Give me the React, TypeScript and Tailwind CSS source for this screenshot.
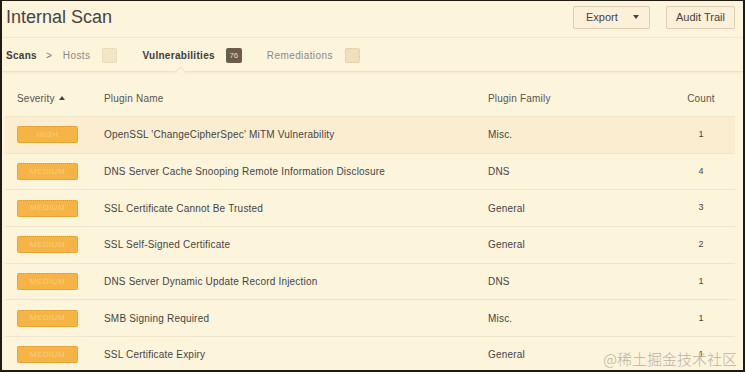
import React from 'react';

const ROWS = [
  { name: "OpenSSL 'ChangeCipherSpec' MiTM Vulnerability", family: 'Misc.', count: 1 },
  { name: 'DNS Server Cache Snooping Remote Information Disclosure', family: 'DNS', count: 4 },
  { name: 'SSL Certificate Cannot Be Trusted', family: 'General', count: 3 },
  { name: 'SSL Self-Signed Certificate', family: 'General', count: 2 },
  { name: 'DNS Server Dynamic Update Record Injection', family: 'DNS', count: 1 },
  { name: 'SMB Signing Required', family: 'Misc.', count: 1 },
  { name: 'SSL Certificate Expiry', family: 'General', count: 1 },
];

const App: React.FC = () => {
  return (
    <div className="relative w-[745px] h-[372px] overflow-hidden bg-[#fdf4dc] border-x-2 border-b-2 border-t border-[#1e1a14] font-['Liberation_Sans',Arial,sans-serif] text-[#4a4a4a]">
      {/* Title bar */}
      <div className="flex items-center h-[37px] pl-[4px] pr-[8px] border-b border-[#f3e8cc]">
        <h1 className="text-[18px] leading-none text-[#444] pb-[4px]">Internal Scan</h1>
        <div className="ml-auto flex items-center gap-[16px] pb-[4px]">
          <button className="flex items-center h-[23px] w-[77px] pl-[12px] pr-[10px] border border-[#dccfb1] rounded-[2px] bg-[#fcf1d8] text-[11px] text-[#444]">
            Export
            <span className="ml-auto w-0 h-0 border-x-[3.5px] border-x-transparent border-t-[4px] border-t-[#444]" />
          </button>
          <button className="h-[23px] w-[69px] border border-[#dccfb1] rounded-[2px] bg-[#fcf1d8] text-[11px] text-[#444]">
            Audit Trail
          </button>
        </div>
      </div>

      {/* Tabs */}
      <div className="relative flex items-center h-[34px] pl-[4px] pt-[2px] text-[10px] border-b border-[#efe2c3] shadow-[0_1px_2px_rgba(180,150,90,0.12)]">
        <span className="font-bold text-[#3c3c3c] tracking-[0.3px]">Scans</span>
        <span className="ml-[9px] text-[#777]">&gt;</span>
        <span className="ml-[11px] text-[#888] tracking-[0.4px]">Hosts</span>
        <span className="ml-[12px] w-[15px] h-[15px] rounded-[2px] bg-[#f3e6c6] border border-dotted border-[#e2d2ab]" />
        <span className="ml-[25px] font-bold text-[#3c3c3c] tracking-[0.3px]">Vulnerabilities</span>
        <span className="ml-[11px] flex items-center justify-center w-[16px] h-[15px] rounded-[2px] bg-[#6c5b49] text-[8px] text-[#e8dcc4]">76</span>
        <span className="ml-[25px] text-[#8a8a8a] tracking-[0.4px]">Remediations</span>
        <span className="ml-[12px] w-[15px] h-[15px] rounded-[2px] bg-[#efdfbb] border border-dotted border-[#dcc9a0]" />
        <span className="absolute left-[175px] bottom-[-4px] w-[7px] h-[7px] rotate-45 bg-[#fdf4dc] border-l border-t border-[#efe2c3]" />
      </div>

      {/* Table */}
      <div className="ml-[3px] mr-[8px]">
        <div className="grid grid-cols-[87px_384px_1fr_44px] items-center pt-[8px] h-[45px] px-[12px] text-[10px] tracking-[0.2px] text-[#555] border-b border-[#f1e5c7]">
          <div className="flex items-center gap-[4px]">
            Severity
            <span className="w-0 h-0 border-x-[3.5px] border-x-transparent border-b-[4px] border-b-[#444]" />
          </div>
          <div>Plugin Name</div>
          <div>Plugin Family</div>
          <div className="text-center">Count</div>
        </div>
        {ROWS.map((r, i) => (
          <div
            key={r.name}
            className={`grid grid-cols-[87px_384px_1fr_44px] items-center h-[36.7px] px-[12px] text-[10px] tracking-[0.2px] text-[#444] border-b border-[#f1e5c7] ${i === 0 ? 'bg-[#fbedcf]' : ''}`}
          >
            <div>
              <span className="flex items-center justify-center w-[61px] h-[17px] rounded-[2px] bg-[#f6b446] border border-dotted border-[#d9982c] text-[8px] text-[#f9cc7e] tracking-[0.5px]">
                {i === 0 ? 'HIGH' : 'MEDIUM'}
              </span>
            </div>
            <div>{r.name}</div>
            <div>{r.family}</div>
            <div className="text-center text-[9px]">{r.count}</div>
          </div>
        ))}
      </div>

      <div className="absolute right-[6px] bottom-[4px] text-[15px] leading-none text-[#b9b3a6] font-['Noto_Sans_CJK_SC',sans-serif] font-light">
        @稀土掘金技术社区
      </div>
    </div>
  );
};

export default App;
